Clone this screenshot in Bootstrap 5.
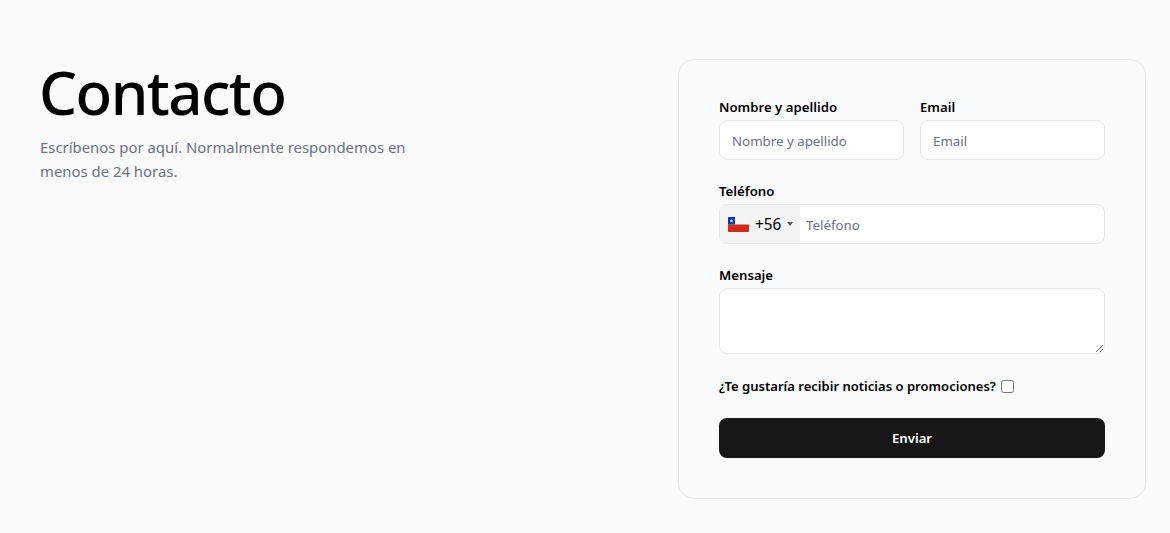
<!DOCTYPE html>
<html lang="es">
<head>
  <meta charset="UTF-8">
  <meta name="viewport" content="width=device-width, initial-scale=1">
  <title>Contacto</title>
  <link href="https://cdn.jsdelivr.net/npm/bootstrap@5.3.0/dist/css/bootstrap.min.css" rel="stylesheet">
  <style>
    body {
      background-color: #f9fafb;
      font-family: "Noto Sans", "Open Sans", sans-serif;
      color: #000;
    }
    .page-wrap {
      padding: 59px 24px 34px 40px;
    }
    .intro-title {
      font-size: 60px;
      font-weight: 540;
      letter-spacing: -1.55px;
      line-height: 70px;
      margin: -2px 0 8px -1px;
    }
    .intro-text {
      width: 390px;
      font-size: 14.9px;
      line-height: 24px;
      color: #6b7280;
      margin: 0;
    }
    .contact-box {
      width: 468px;
      height: 440px;
      border: 1px solid #e5e7eb;
      border-radius: 16px;
      padding: 40px;
    }
    .field-label {
      display: block;
      font-size: 13.2px;
      font-weight: 600;
      line-height: 14px;
      margin-bottom: 6px;
    }
    .field-row {
      margin-bottom: 24px;
    }
    .field-input {
      height: 40px;
      border: 1px solid #e5e7eb;
      border-radius: 8px;
      font-size: 13.3px;
      padding: 2px 12px 0;
      background: #fff;
    }
    .field-input::placeholder {
      color: #6b7280;
    }
    .phone-box {
      height: 40px;
      border: 1px solid #e5e7eb;
      border-radius: 8px;
      background: #fff;
      overflow: hidden;
    }
    .phone-prefix {
      width: 80px;
      background: #f3f3f3;
      padding-left: 8px;
      font-size: 15.4px;
    }
    .phone-prefix svg {
      margin-right: 6px;
      border-radius: 1px;
    }
    .phone-code {
      padding-top: 2px;
    }
    .phone-caret {
      width: 0;
      height: 0;
      margin-left: 6px;
      border-left: 3px solid transparent;
      border-right: 3px solid transparent;
      border-top: 4px solid #555;
    }
    .phone-input {
      border: 0;
      outline: 0;
      flex: 1;
      min-width: 0;
      font-size: 13.3px;
      padding: 3px 6px 0;
      background: transparent;
    }
    .phone-input::placeholder {
      color: #6b7280;
    }
    .message-input {
      height: 66px;
      border: 1px solid #e5e7eb;
      border-radius: 8px;
      background: #fff;
      display: block;
      width: 100%;
    }
    .promo-row {
      margin: 24px 0;
      font-size: 13.05px;
      font-weight: 600;
      line-height: 16px;
    }
    .promo-check {
      width: 13px;
      height: 13px;
      margin: 0 0 0 5px;
    }
    .send-btn {
      height: 40px;
      border-radius: 8px;
      background: #171717;
      border: 0;
      padding-top: 8px;
      color: #fff;
      font-size: 13.2px;
      font-weight: 600;
    }
    .send-btn:hover {
      background: #171717;
      color: #fff;
    }
  </style>
</head>
<body>
  <div class="page-wrap d-flex justify-content-between align-items-start">
    <div>
      <h1 class="intro-title">Contacto</h1>
      <p class="intro-text">Escríbenos por aquí. Normalmente respondemos en menos de 24 horas.</p>
    </div>

    <form class="contact-box">
      <div class="d-flex gap-3 field-row">
        <div class="flex-fill w-50">
          <label class="field-label" for="nombre">Nombre y apellido</label>
          <input type="text" id="nombre" class="form-control field-input" placeholder="Nombre y apellido">
        </div>
        <div class="flex-fill w-50">
          <label class="field-label" for="email">Email</label>
          <input type="email" id="email" class="form-control field-input" placeholder="Email">
        </div>
      </div>

      <div class="field-row">
        <label class="field-label" for="telefono">Teléfono</label>
        <div class="phone-box d-flex">
          <div class="phone-prefix d-flex align-items-center">
            <svg width="21" height="15" viewBox="0 0 21 15">
              <rect width="21" height="7.5" fill="#f4f4f4"/>
              <rect y="7.5" width="21" height="7.5" fill="#d52b1e"/>
              <rect width="7" height="7.5" fill="#0039a6"/>
              <path d="M3.5 1.8l.5 1.4h1.4l-1.1.9.4 1.4-1.2-.8-1.2.8.4-1.4-1.1-.9h1.4z" fill="#fff"/>
            </svg>
            <span class="phone-code">+56</span>
            <span class="phone-caret"></span>
          </div>
          <input type="tel" id="telefono" class="phone-input" placeholder="Teléfono">
        </div>
      </div>

      <div>
        <label class="field-label" for="mensaje">Mensaje</label>
        <textarea id="mensaje" class="message-input"></textarea>
      </div>

      <div class="promo-row d-flex align-items-center">
        <label for="promo">¿Te gustaría recibir noticias o promociones?</label>
        <input type="checkbox" id="promo" class="promo-check">
      </div>

      <button type="button" class="btn send-btn w-100">Enviar</button>
    </form>
  </div>

  <script src="https://cdn.jsdelivr.net/npm/bootstrap@5.3.0/dist/js/bootstrap.bundle.min.js"></script>
</body>
</html>
